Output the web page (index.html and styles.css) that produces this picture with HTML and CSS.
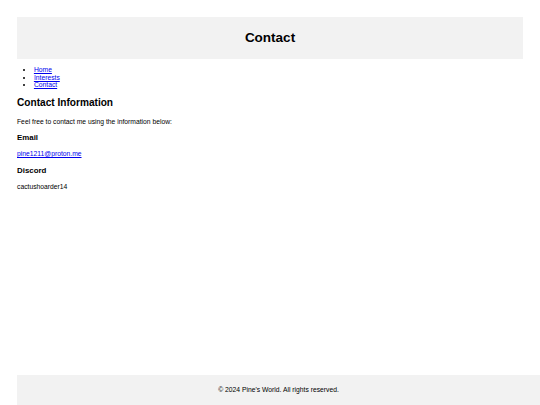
FILE: index.html
```html
<!doctype html>
<html lang="en">
<head>
  <meta charset="utf-8"/>
  <title>Contact</title>
  <link rel="stylesheet" href="styles.css">
</head>
<body>
<header class="site-header">
  <h1>Contact</h1>
</header>

<div class="content">
  <nav>
    <ul>
      <li><a href="#">Home</a></li>
      <li><a href="#">Interests</a></li>
      <li><a href="#">Contact</a></li>
    </ul>
  </nav>

  <h2>Contact Information</h2>
  <p>Feel free to contact me using the information below:</p>

  <h3>Email</h3>
  <p><a href="#">pine1211@proton.me</a></p>

  <h3>Discord</h3>
  <p>cactushoarder14</p>
</div>

<footer class="site-footer">
  <p>&copy; 2024 Pine's World. All rights reserved.</p>
</footer>
</body>
</html>
```

FILE: styles.css
```css
html{overflow-x:hidden}
body{
  font-family:"Liberation Sans",Arial,sans-serif;font-size:6.75px;line-height:1.15;color:#000;
  margin:0;padding:17px 17px 0;min-height:100vh;box-sizing:border-box;
  display:flex;flex-direction:column;
}
a{color:#0000ee}
h1,h2,h3{line-height:1.16}
.site-header{background:#f2f2f2;padding:4.2px;text-align:center}
.site-header h1{font-size:2em;margin:.67em 0}
.content{display:block}
ul{margin:1em 0;padding-left:16.9px}
h2{font-size:1.5em;margin:.83em 0}
h3{font-size:1.17em;margin:1em 0}
p{margin:1em 0}
.site-footer{margin-top:auto;margin-right:-17px;background:#f2f2f2;
  padding:4.2px;text-align:center}
```
